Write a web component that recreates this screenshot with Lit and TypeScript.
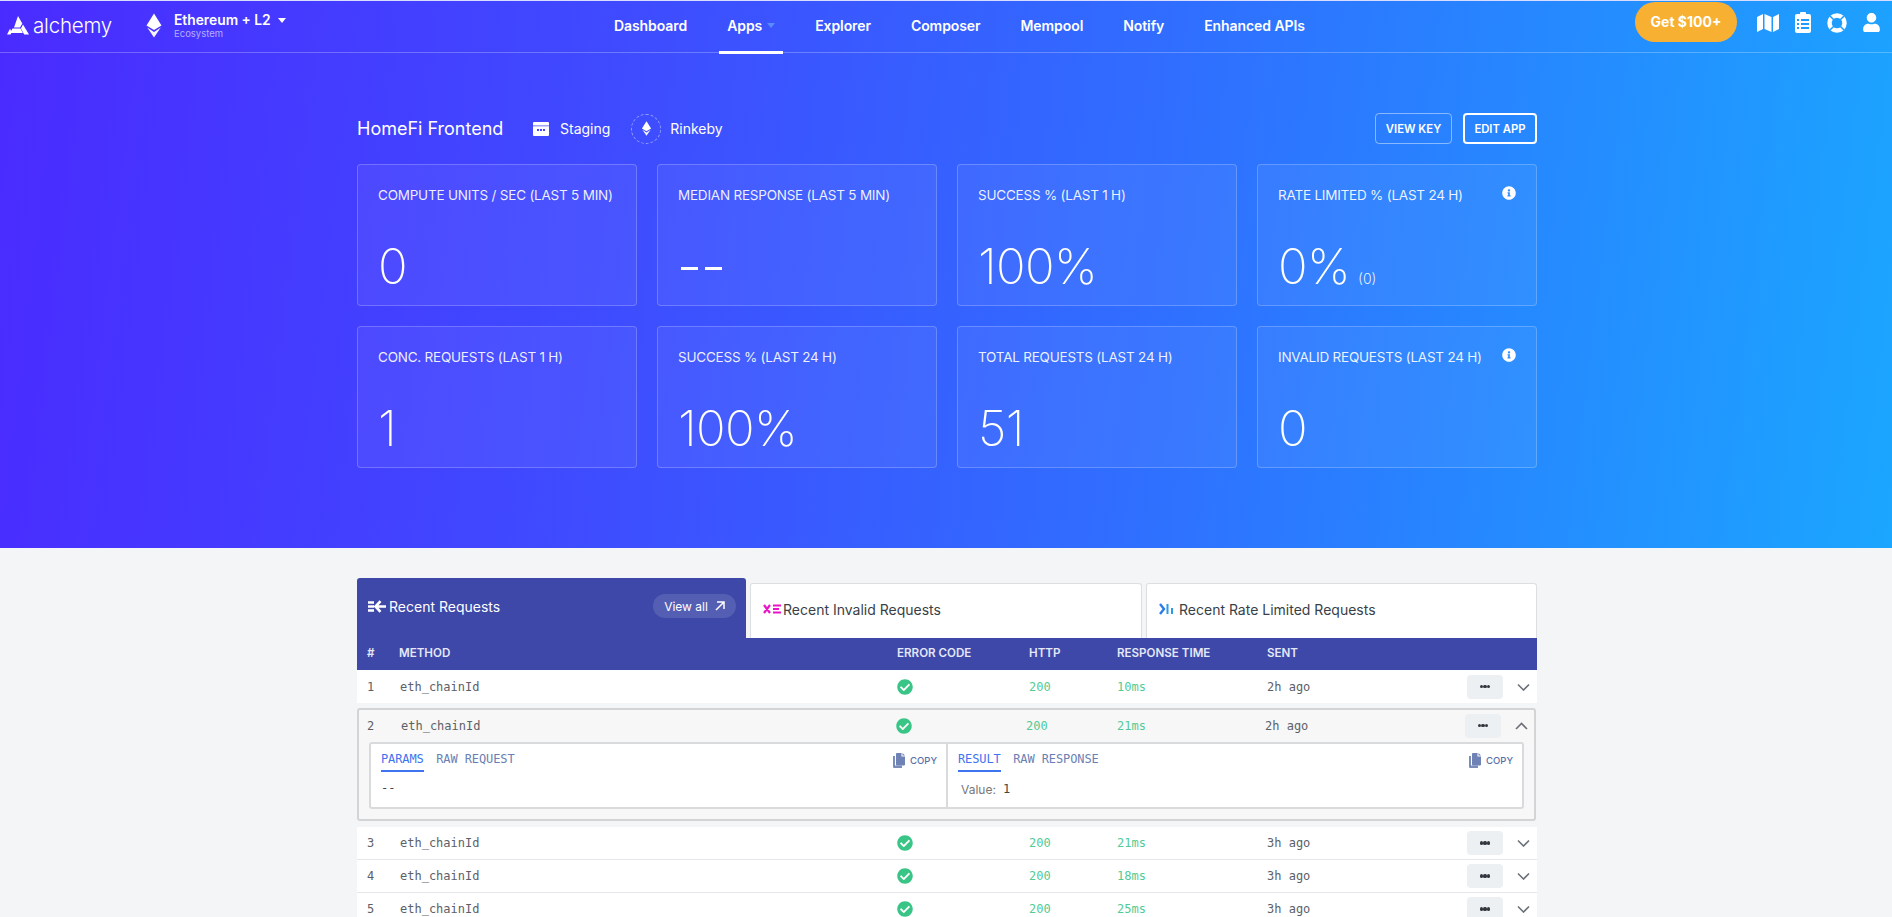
import { LitElement, html, css, svg } from "lit";
import { customElement } from "lit/decorators.js";

const ETH = svg`<path d="M12 0 L22 16 L12 22 L2 16 Z" fill="currentColor"/><path d="M12 24.500 L21 18.800 L12 32 L3 18.800 Z" fill="currentColor" opacity=".95"/>`;
const eth = (w: number, h: number) => html`<svg width=${w} height=${h} viewBox="0 0 24 32">${ETH}</svg>`;
const CHECK = svg`<path fill="currentColor" d="M504 256c0 136.967-111.033 248-248 248S8 392.967 8 256 119.033 8 256 8s248 111.033 248 248zM227.314 387.314l184-184c6.248-6.248 6.248-16.379 0-22.627l-22.627-22.627c-6.248-6.249-16.379-6.249-22.628 0L216 308.118l-70.059-70.059c-6.248-6.248-16.379-6.248-22.628 0l-22.627 22.627c-6.248 6.248-6.248 16.379 0 22.627l104 104c6.249 6.25 16.379 6.25 22.628.001z"/>`;
const INFO = html`<svg class="info" width="14" height="14" viewBox="0 0 512 512"><path fill="#fff" d="M256 8C119 8 8 119.100 8 256c0 137 111 248 248 248s248-111 248-248C504 119.100 393 8 256 8zm0 110c23.200 0 42 18.800 42 42s-18.800 42-42 42-42-18.800-42-42 18.800-42 42-42zm56 254c0 6.600-5.400 12-12 12h-88c-6.600 0-12-5.400-12-12v-24c0-6.600 5.400-12 12-12h12v-64h-12c-6.600 0-12-5.400-12-12v-24c0-6.600 5.400-12 12-12h64c6.600 0 12 5.400 12 12v100h12c6.600 0 12 5.400 12 12v24z"/></svg>`;
const COPY = html`<svg width="12" height="15" viewBox="0 0 12 15"><path fill="#7a8cba" d="M0 3h2v9.500h7V15H1a1 1 0 0 1-1-1z"/><path fill="#6f82b5" d="M3 1a1 1 0 0 1 1-1h4.500v3.500H12V11.500a1 1 0 0 1-1 1H4a1 1 0 0 1-1-1z"/><path fill="#6f82b5" d="M9.500 0 12 2.500H9.500z"/></svg>`;

const stats = [
  { label: "COMPUTE UNITS / SEC (LAST 5 MIN)", value: "0" },
  { label: "MEDIAN RESPONSE (LAST 5 MIN)", value: "-", dash: true },
  { label: "SUCCESS % (LAST 1 H)", value: "100%" },
  { label: "RATE LIMITED % (LAST 24 H)", value: "0%", sub: "(0)", info: true },
  { label: "CONC. REQUESTS (LAST 1 H)", value: "1" },
  { label: "SUCCESS % (LAST 24 H)", value: "100%" },
  { label: "TOTAL REQUESTS (LAST 24 H)", value: "51" },
  { label: "INVALID REQUESTS (LAST 24 H)", value: "0", info: true },
];
const rows = [
  { n: 1, ms: "10ms", ago: "2h ago" },
  { n: 2, ms: "21ms", ago: "2h ago", open: true },
  { n: 3, ms: "21ms", ago: "3h ago" },
  { n: 4, ms: "18ms", ago: "3h ago" },
  { n: 5, ms: "25ms", ago: "3h ago" },
];

@customElement("app-root")
export class AppRoot extends LitElement {
  static styles = css`
    :host { display: block; height: 917px; overflow: hidden; background: #f3f5f7; font-family: Inter, "Noto Sans", sans-serif; }
    * { box-sizing: border-box; }
    .hero { height: 548px; color: #fff; border-top: 1px solid #d8dcff;
      background: linear-gradient(97deg, #4a2bff 0%, #3f4bff 32%, #2f70ff 62%, #1ba6ff 100%); }
    header { height: 52px; display: flex; align-items: center; border-bottom: 1px solid rgba(255,255,255,.25); }
    .logo { display: flex; align-items: center; width: 145px; padding-left: 7px; gap: 4px; font-size: 20.500px; font-weight: 300; letter-spacing: -.2px; padding-bottom: 3px; }
    .eco { display: flex; align-items: center; width: 461px; gap: 11px; padding-bottom: 2px; }
    .eco .t { font-size: 13.800px; font-weight: 600; display: flex; align-items: center; gap: 7px; line-height: 15px; }
    .eco .s { font-size: 9.500px; color: rgba(255,255,255,.6); line-height: 11px; }
    .caret { width: 0; height: 0; border: 4.500px solid transparent; border-top: 5px solid #fff; border-bottom: 0; }
    nav { display: flex; gap: 24px; height: 51px; font-size: 14px; font-weight: 600; letter-spacing: -.08px; }
    nav a { padding: 0 8px; display: flex; align-items: center; gap: 5px; position: relative; padding-bottom: 2px; white-space: nowrap; }
    nav a.on { width: 64px; }
    nav a.on::after { content: ""; position: absolute; left: 0; right: 0; bottom: -2px; height: 3px; background: #fff; }
    nav .caret { border-top-color: #5a8cff; }
    .right { margin-left: auto; display: flex; align-items: center; padding-right: 12px; }
    .get { width: 102px; height: 40px; border-radius: 20px; background: #f8b033; display: flex; align-items: center; justify-content: center; font-size: 14px; font-weight: 700; margin-right: 20px; margin-bottom: 10px; }
    .ic { display: flex; gap: 16px; align-items: center; margin-bottom: 8px; }
    .wrap { width: 1180px; margin: 0 auto 0 357px; }
    .title { height: 31px; margin-top: 60px; display: flex; align-items: center; }
    .title h1 { margin: 0 32px 0 0; font-size: 18px; font-weight: 400; width: 144px; white-space: nowrap; }
    .badge { display: flex; align-items: center; font-size: 14px; gap: 9px; }
    .staging { gap: 11px; margin-right: 21px; }
    .ring { width: 30px; height: 30px; border-radius: 50%; border: 1px dashed rgba(255,255,255,.45); display: flex; align-items: center; justify-content: center; }
    .btns { margin-left: auto; display: flex; gap: 11px; }
    .btn { height: 31px; display: flex; align-items: center; justify-content: center; border-radius: 4px; font-size: 11.300px; font-weight: 600; border: 1px solid rgba(255,255,255,.45); width: 77px; white-space: nowrap; }
    .btn.edit { border: 2px solid #fff; width: 74px; }
    .grid { margin-top: 20px; display: grid; grid-template-columns: repeat(4, 280px); grid-auto-rows: 142px; gap: 20px; row-gap: 20px; }
    .card { border: 1px solid rgba(255,255,255,.22); border-radius: 4px; background: rgba(255,255,255,.055); padding: 20px 20px 0; position: relative; }
    .card .l { font-size: 13.500px; letter-spacing: -.22px; line-height: 20px; white-space: nowrap; color: rgba(255,255,255,.92); }
    .info { position: absolute; top: 21px; right: 20px; }
    .card .v { margin-top: 33px; font-size: 49px; font-weight: 200; line-height: 58px; display: flex; align-items: baseline; gap: 8px; letter-spacing: -.6px; }
    .card .v small { font-size: 14px; font-weight: 300; letter-spacing: 0; color: rgba(255,255,255,.9); }
    .dash { display: flex; gap: 7px; height: 58px; align-items: center; padding-top: 2px; padding-left: 3px; }
    .dash i { width: 17px; height: 3px; background: #fff; display: block; }
    .tabs { margin-top: 30px; display: flex; gap: 4px; height: 60px; align-items: flex-end; font-size: 14px; color: #3a3f47; }
    .tab { flex: 1; height: 55px; background: #fff; border: 1px solid #dcdfe2; border-bottom: 0; border-radius: 3px 3px 0 0; display: flex; align-items: center; gap: 2px; padding: 0 12px 4px; white-space: nowrap; }
    .tab.on { flex: none; width: 389px; height: 60px; background: #3d48a8; border: 0; color: #fff; padding: 0 10px 10px 11px; gap: 3px; }
    .tab.on span { position: relative; top: 3px; }
    .tab.t2 { width: 392px; flex: none; } .tab.t3 { flex: 1; gap: 5px; }
    .pill { margin-left: auto; width: 83px; height: 24px; border-radius: 12px; background: rgba(255,255,255,.12); display: flex; align-items: center; justify-content: center; gap: 7px; font-size: 12px; position: relative; top: 3px; }
    .row, .thead { display: grid; align-items: center; padding-left: 10px; }
    .thead { height: 32px; background: #3d48a8; color: #e4e7f8; font-size: 11.600px; font-weight: 600; grid-template-columns: 32px 498px 132px 88px 150px 200px; padding-bottom: 3px; }
    .row { height: 33px; background: #fff; font: 12px "DejaVu Sans Mono", monospace; color: #5c6168; grid-template-columns: 33px 497px 132px 88px 150px 200px 36px 1fr; border-bottom: 1px solid #e4e6e9; }
    .row .g { color: #52cb96; }
    .ok { color: #38c585; display: block; }
    .more { width: 36px; height: 24px; border-radius: 4px; background: #ecf0f3; display: flex; align-items: center; justify-content: center; gap: .6px; }
    .more i { width: 3.200px; height: 3.200px; border-radius: 50%; background: #33383f; }
    .chev { margin-left: 14px; display: block; }
    .first { margin-bottom: 5px; border-bottom: 0; }
    .last { margin-top: 6px; }
    .open { height: 113px; border: 2px solid #d2d4d6; border-radius: 3px; background: #f7f7f7; margin-right: 1px; }
    .open .row { background: transparent; border: 0; padding-left: 8px; height: 32px; padding-bottom: 1px; grid-template-columns: 34px 495px 130px 91px 148px 200px 36px 1fr; }
    .panels { margin: 0 10px; height: 67px; border: 2px solid #d8dadc; border-radius: 3px; background: #fff; display: grid; grid-template-columns: 575px 1fr; }
    .panel { padding: 8px 8px 0 10px; position: relative; font: 12px "DejaVu Sans Mono", monospace; color: #6b7fb3; }
    .panel + .panel { border-left: 2px solid #d8dadc; }
    .ptabs { display: flex; gap: 12.500px; align-items: flex-start; height: 21px; }
    .ptabs span { height: 20px; line-height: 15px; letter-spacing: -.1px; }
    .ptabs .a { color: #3f74f0; border-bottom: 2px solid #3f74f0; }
    .copy { margin-left: auto; display: flex; align-items: center; gap: 5px; font: 500 9.500px Inter, sans-serif; color: #5a6ea8; height: 17px; position: relative; left: -1px; }
    .val { color: #444; padding-top: 8px; }
    .val2 { padding: 9px 0 0 3px; font: 12px Inter, sans-serif; display: flex; gap: 7px; }
    .val2 b { font: 12px "DejaVu Sans Mono", monospace; color: #444; }
    .val2 span { color: #777; }
  `;

  row(r: any) {
    const up = r.open;
    return html`<div class="row ${r.n === 1 ? "first" : ""} ${r.n === 3 ? "last" : ""}">
      <span>${r.n}</span><span>eth_chainId</span>
      <svg class="ok" width="16" height="16" viewBox="0 0 512 512">${CHECK}</svg>
      <span class="g">200</span><span class="g">${r.ms}</span><span>${r.ago}</span>
      <div class="more"><i></i><i></i><i></i></div>
      <svg class="chev" width="13" height="8" viewBox="0 0 13 8" fill="none" stroke="#6c7178" stroke-width="1.600"><path d=${up ? "M1 7l5.500-5.500 5.500 5.500" : "M1 1.500l5.500 5.500 5.500-5.500"}/></svg>
    </div>`;
  }

  render() {
    return html`
      <div class="hero">
        <header>
          <div class="logo">
            <svg width="22" height="19" viewBox="0 0 22 19"><path fill="#fff" d="M11 0l4.300 7.500-2.300 4-6-.1zM5.500 12.500h8l2.300 4.500H3zM0 18.500l3-5.800 1.800 3.400-1.300 2.400zM16 8.500L22 18.500h-4.800l-3.300-6z"/></svg>
            <span>alchemy</span>
          </div>
          <div class="eco">
            ${eth(18, 27)}
            <div><div class="t">Ethereum + L2 <span class="caret"></span></div><div class="s">Ecosystem</div></div>
          </div>
          <nav>
            <a>Dashboard</a><a class="on">Apps <span class="caret"></span></a><a>Explorer</a><a>Composer</a><a>Mempool</a><a>Notify</a><a>Enhanced APIs</a>
          </nav>
          <div class="right">
            <div class="get">Get $100+</div>
            <div class="ic">
              <svg width="22" height="18" viewBox="0 0 22 18"><path fill="#fff" d="M0 3l6-3v15l-6 3zM7.500 0l7 3v15l-7-3zM16 3l6-3v15l-6 3z"/></svg>
              <svg width="16" height="21" viewBox="0 0 16 21"><path fill="#fff" fill-rule="evenodd" d="M5 2V1a1 1 0 0 1 1-1h4a1 1 0 0 1 1 1v1h3a2 2 0 0 1 2 2v15a2 2 0 0 1-2 2H2a2 2 0 0 1-2-2V4a2 2 0 0 1 2-2zM2 7v2h2V7zm4 0v2h8V7zm-4 4v2h2v-2zm4 0v2h8v-2zm-4 4v2h2v-2zm4 0v2h8v-2z"/></svg>
              <svg width="20" height="20" viewBox="0 0 20 20" fill="none"><circle cx="10" cy="10" r="7.500" stroke="#fff" stroke-width="4.500"/><path stroke="#1f9dff" stroke-width="1.500" d="M3 3l4.500 4.500M17 3l-4.500 4.500M3 17l4.500-4.500M17 17l-4.500-4.500"/></svg>
              <svg width="17" height="19" viewBox="0 0 448 512"><path fill="#fff" d="M224 256c70.700 0 128-57.300 128-128S294.700 0 224 0 96 57.300 96 128s57.300 128 128 128zm89.600 32h-16.700c-22.200 10.200-46.900 16-72.900 16s-50.600-5.800-72.900-16h-16.700C60.200 288 0 348.200 0 422.400V464c0 26.500 21.500 48 48 48h352c26.500 0 48-21.500 48-48v-41.600c0-74.200-60.200-134.400-134.400-134.400z"/></svg>
            </div>
          </div>
        </header>
        <div class="wrap">
          <div class="title">
            <h1>HomeFi Frontend</h1>
            <div class="badge staging">
              <svg width="16" height="14" viewBox="0 0 16 14"><path fill="#fff" fill-rule="evenodd" d="M1 0h14a1 1 0 0 1 1 1v12a1 1 0 0 1-1 1H1a1 1 0 0 1-1-1V1a1 1 0 0 1 1-1zm-1 3.500v.8h16v-.8zM4 7v2h2V7zm3 0v2h2V7zm3 0v2h2V7z"/></svg>
              <span>Staging</span>
            </div>
            <div class="badge"><div class="ring">${eth(11, 15)}</div><span>Rinkeby</span></div>
            <div class="btns"><div class="btn">VIEW KEY</div><div class="btn edit">EDIT APP</div></div>
          </div>
          <div class="grid">
            ${stats.map((s) => html`<div class="card">
              <div class="l">${s.label}</div>
              ${s.info ? INFO : ""}
              <div class="v">${s.dash ? html`<div class="dash"><i></i><i></i></div>` : html`<span>${s.value}</span>`}${s.sub ? html`<small>${s.sub}</small>` : ""}</div>
            </div>`)}
          </div>
        </div>
      </div>
      <div class="wrap">
        <div class="tabs">
          <div class="tab on">
            <svg width="18" height="13" viewBox="0 0 18 13" fill="none" stroke="#fff" style="position:relative;top:3px"><path stroke-width="2.400" d="M0 2.500h6M0 6.500h6M0 10.500h6"/><path stroke-width="2.600" d="M12.500 1.200L7.500 6.500l5 5.300M8 6.500h10"/></svg>
            <span>Recent Requests</span>
            <div class="pill">View all <svg width="10" height="10" viewBox="0 0 10 10" fill="none" stroke="#fff" stroke-width="1.500"><path d="M1 9l8-8M2 1h7v7"/></svg></div>
          </div>
          <div class="tab t2">
            <svg width="18" height="10" viewBox="0 0 18 10" fill="none" stroke="#e815c8" stroke-width="2.200"><path d="M1 1l6 8M7 1L1 9M10 1.500h8M10 5h6M10 8.500h8"/></svg>
            <span>Recent Invalid Requests</span>
          </div>
          <div class="tab t3">
            <svg width="15" height="12" viewBox="0 0 15 12" fill="none"><path stroke="#2b7bea" stroke-width="2.400" d="M1 1l4 5-4 5"/><path stroke="#2b9be8" stroke-width="2" d="M8.500 1v10M13 5v6"/></svg>
            <span>Recent Rate Limited Requests</span>
          </div>
        </div>
        <div class="thead"><span>#</span><span>METHOD</span><span>ERROR CODE</span><span>HTTP</span><span>RESPONSE TIME</span><span>SENT</span></div>
        ${rows.map((r) => r.open ? html`<div class="open">
          ${this.row(r)}
          <div class="panels">
            <div class="panel"><div class="ptabs"><span class="a">PARAMS</span><span>RAW REQUEST</span><div class="copy">${COPY} COPY</div></div><div class="val">--</div></div>
            <div class="panel"><div class="ptabs"><span class="a">RESULT</span><span>RAW RESPONSE</span><div class="copy">${COPY} COPY</div></div><div class="val2"><span>Value:</span><b>1</b></div></div>
          </div>
        </div>` : this.row(r))}
      </div>
    `;
  }
}
